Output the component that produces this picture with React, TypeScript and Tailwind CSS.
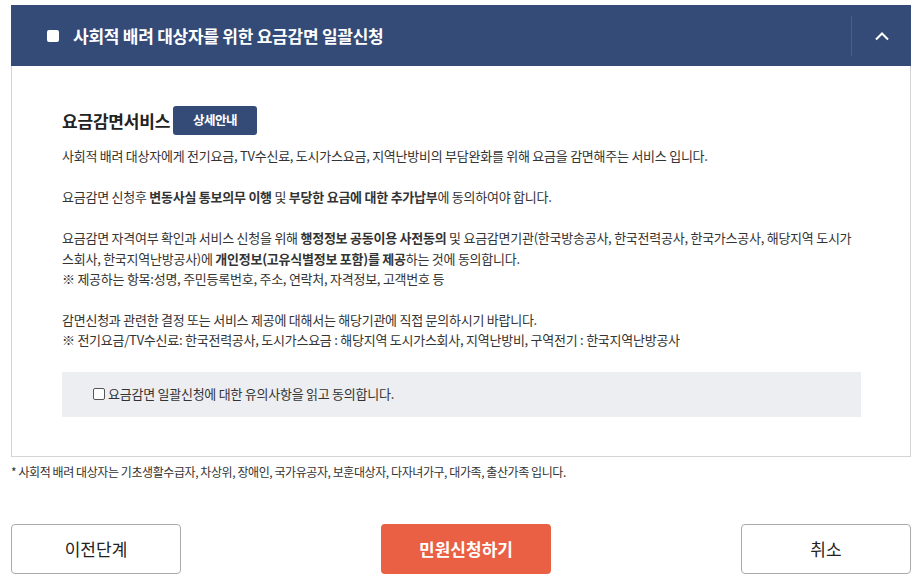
import React from "react";

export default function App() {
  const font = { fontFamily: '"Noto Sans CJK KR", "Noto Sans", sans-serif' };
  return (
    <div className="w-[923px] h-[580px] bg-white pt-[5px] text-[#333]" style={font}>
      <div className="ml-[11px] w-[900px]">
        {/* header */}
        <div className="h-[61px] bg-[#344b77] flex items-center">
          <div className="ml-[36px] w-[12px] h-[12px] bg-white rounded-[2px]" />
          <div className="ml-[14px] text-white text-[17px] font-bold tracking-[-0.25px] leading-none">
            사회적 배려 대상자를 위한 요금감면 일괄신청
          </div>
          <div className="ml-auto h-[40px] w-px bg-[#4b5f86]" />
          <div className="w-[59px] flex justify-center">
            <svg width="16" height="10" viewBox="0 0 16 10">
              <path d="M2 8.5 L8 2.5 L14 8.5" fill="none" stroke="white" strokeWidth="2" />
            </svg>
          </div>
        </div>
        {/* body */}
        <div className="border border-t-0 border-[#d5d5d5] pl-[50px] pr-[49px] pt-[40px] pb-[39px]">
          <div className="flex items-center">
            <div className="text-[17px] font-bold tracking-[-0.2px] text-[#222]">요금감면서비스</div>
            <div className="ml-[3px] h-[29px] w-[84px] bg-[#344b77] rounded-[3px] text-white text-[12.5px] font-bold tracking-[-0.5px] flex items-center justify-center">
              상세안내
            </div>
          </div>
          <div className="mt-[11px] text-[13px] leading-[20.5px] tracking-[-0.25px]">
            <p>사회적 배려 대상자에게 전기요금, TV수신료, 도시가스요금, 지역난방비의 부담완화를 위해 요금을 감면해주는 서비스 입니다.</p>
            <p className="mt-[20px]">
              요금감면 신청후 <b>변동사실 통보의무 이행</b> 및 <b>부당한 요금에 대한 추가납부</b>에 동의하여야 합니다.
            </p>
            <p className="mt-[21px]">
              요금감면 자격여부 확인과 서비스 신청을 위해 <b>행정정보 공동이용 사전동의</b> 및 요금감면기관(한국방송공사, 한국전력공사, 한국가스공사, 해당지역 도시가
              <br />
              스회사, 한국지역난방공사)에 <b>개인정보(고유식별정보 포함)를 제공</b>하는 것에 동의합니다.
              <br />※ 제공하는 항목:성명, 주민등록번호, 주소, 연락처, 자격정보, 고객번호 등
            </p>
            <p className="mt-[20px]">
              감면신청과 관련한 결정 또는 서비스 제공에 대해서는 해당기관에 직접 문의하시기 바랍니다.
              <br />※ 전기요금/TV수신료: 한국전력공사, 도시가스요금 : 해당지역 도시가스회사, 지역난방비, 구역전기 : 한국지역난방공사
            </p>
          </div>
          <div className="mt-[21px] h-[45px] bg-[#edeef2] flex items-center pl-[31px]">
            <div className="w-[12px] h-[12px] border border-[#555] rounded-[2px] bg-white" />
            <span className="ml-[3px] text-[13px] tracking-[-0.25px]">요금감면 일괄신청에 대한 유의사항을 읽고 동의합니다.</span>
          </div>
        </div>
        <div className="mt-[6px] text-[12px] tracking-[-0.42px] text-[#333]">
          * 사회적 배려 대상자는 기초생활수급자, 차상위, 장애인, 국가유공자, 보훈대상자, 다자녀가구, 대가족, 출산가족 입니다.
        </div>
        <div className="mt-[43px] flex">
          <button className="w-[170px] h-[50px] border border-[#aaa] rounded-[4px] bg-white text-[17px] text-[#222]">이전단계</button>
          <button className="ml-[200px] w-[170px] h-[50px] rounded-[4px] bg-[#e96044] text-white text-[17px] font-bold">민원신청하기</button>
          <button className="ml-auto w-[170px] h-[50px] border border-[#aaa] rounded-[4px] bg-white text-[17px] text-[#222]">취소</button>
        </div>
      </div>
    </div>
  );
}
